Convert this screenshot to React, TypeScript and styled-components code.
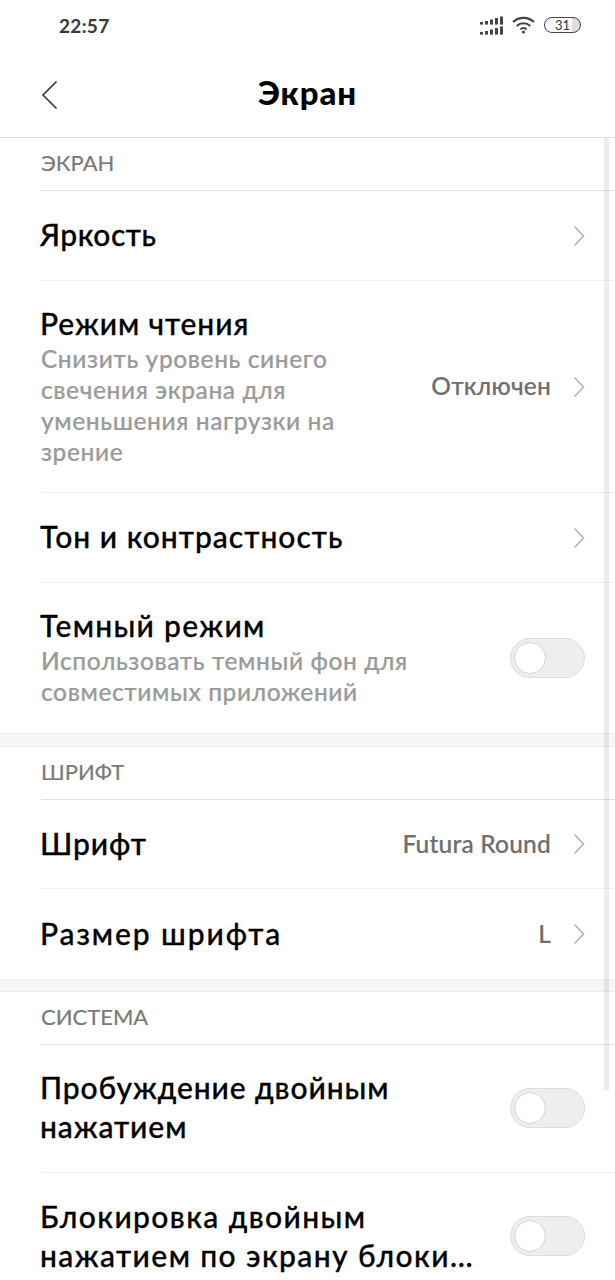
import React from "react";
import styled, { createGlobalStyle } from "styled-components";

const Global = createGlobalStyle`
  html, body { margin: 0; padding: 0; background: #fff; }
  body { font-family: "Lato", "Noto Sans", sans-serif; }
  * { box-sizing: border-box; }
`;

const Page = styled.div`
  position: relative;
  width: 615px;
  height: 1280px;
  overflow: hidden;
  background: #fff;
`;

const StatusBar = styled.div`
  height: 54px;
  display: flex;
  align-items: center;
  justify-content: space-between;
  padding: 0 34px 4px 59px;
`;
const Clock = styled.span`
  font-size: 19px;
  font-weight: 700;
  color: #3a3a3a;
  letter-spacing: 0.3px;
`;
const StatusIcons = styled.div`
  display: flex;
  align-items: center;
  gap: 9px;
`;
const Battery = styled.div`
  width: 37px;
  height: 16px;
  border: 1.5px solid #444;
  border-radius: 8px;
  overflow: hidden;
  display: flex;
  align-items: center;
  justify-content: center;
  font-size: 13px;
  color: #333;
  background: linear-gradient(90deg, #fff 0 76%, #ddd 76% 100%);
`;

const Header = styled.header`
  height: 84px;
  display: flex;
  align-items: center;
  justify-content: center;
  position: relative;
  border-bottom: 1px solid #dedede;
  padding-bottom: 7px;
`;
const Back = styled.svg`
  position: absolute;
  left: 41px;
  top: 26px;
`;
const Title = styled.h1`
  margin: 0;
  font-size: 33px;
  font-weight: 900;
  color: #000;
  letter-spacing: 0.9px;
`;

const SectionLabel = styled.div`
  height: 53px;
  margin-left: 41px;
  border-bottom: 1px solid #e2e2e2;
  display: flex;
  align-items: center;
  font-size: 22px;
  color: #7a7a7a;
  padding-bottom: 4px;
  -webkit-text-stroke: 0.2px #7a7a7a;
`;

const Band = styled.div<{ $h: number }>`
  height: ${(p) => p.$h}px;
  background: #f6f6f6;
  border-top: 1px solid #eee;
  border-bottom: 1px solid #eee;
`;

const Row = styled.div<{ $h: number; $last?: boolean }>`
  height: ${(p) => p.$h}px;
  margin-left: 41px;
  padding-right: 30px;
  display: flex;
  align-items: center;
  justify-content: space-between;
  border-bottom: ${(p) => (p.$last ? "none" : "1px solid #f0f0f0")};
`;
const RowText = styled.div<{ $w?: number }>`
  width: ${(p) => p.$w ?? 440}px;
  display: flex;
  flex-direction: column;
  padding-bottom: 3px;
`;
const RowTitle = styled.div<{ $track?: number }>`
  font-size: 30px;
  line-height: 39px;
  font-weight: 500;
  color: #000;
  letter-spacing: ${(p) => p.$track ?? 0.9}px;
  margin-left: -1px;
  -webkit-text-stroke: 0.3px #000;
`;
const SoloTitle = styled(RowTitle)`
  padding-bottom: 2px;
`;
const RowSub = styled.div`
  font-size: 24.5px;
  line-height: 31px;
  color: #9a9a9a;
  font-weight: 500;
  letter-spacing: 0.6px;
  -webkit-text-stroke: 0.2px #9a9a9a;
`;
const RowRight = styled.div`
  display: flex;
  align-items: center;
  gap: 22px;
`;
const Value = styled.span`
  font-size: 24.5px;
  color: #6e6e6e;
  font-weight: 500;
  letter-spacing: 0.2px;
  padding-bottom: 2px;
  -webkit-text-stroke: 0.2px #6e6e6e;
`;
const Chevron = styled.svg`
  display: block;
`;

const Toggle = styled.div<{ $lift?: number }>`
  position: relative;
  width: 75px;
  height: 40px;
  border-radius: 20px;
  background: #eeeeee;
  border: 1px solid #dcdcdc;
  flex-shrink: 0;
  margin-bottom: ${(p) => p.$lift ?? 0}px;
`;
const Knob = styled.span`
  position: absolute;
  left: 3px;
  top: 3px;
  width: 32px;
  height: 32px;
  border-radius: 50%;
  background: #fff;
  border: 1px solid #d4d4d4;
`;

const Scrollbar = styled.div`
  position: absolute;
  left: 604px;
  top: 138px;
  width: 5px;
  height: 953px;
  border-radius: 0 0 3px 3px;
  background: rgba(0, 0, 0, 0.07);
`;

const Arrow = () => (
  <Chevron width="12" height="22" viewBox="0 0 12 22" fill="none">
    <path d="M1.5 1.5 L10.5 11 L1.5 20.5" stroke="#b4b4b4" strokeWidth="1.6" />
  </Chevron>
);

const Signal = () => (
  <svg width="23" height="19" viewBox="0 0 23 19" fill="#444">
    {[0, 10].map((y) => (
      <g key={y}>
        <rect x="0" y={y + 6} width="3" height="2.6" />
        <rect x="5" y={y + 5} width="3" height="3.6" />
        <rect x="10" y={y + 3.5} width="3" height="5.1" />
        <rect x="15" y={y + 2} width="3" height="6.6" />
        <rect x="20" y={y + 0.5} width="3" height="8.1" />
      </g>
    ))}
  </svg>
);

const Wifi = () => (
  <svg width="23" height="18" viewBox="0 0 23 18" fill="none" stroke="#444" strokeWidth="2.1">
    <path d="M1 6 C7 0.5 16 0.5 22 6" />
    <path d="M4.8 10 C8.5 6.4 14.5 6.4 18.2 10" />
    <path d="M8.4 13.4 C10.2 11.8 12.8 11.8 14.6 13.4" />
    <circle cx="11.5" cy="16" r="1.6" fill="#444" stroke="none" />
  </svg>
);

const Switch = ({ lift }: { lift?: number }) => (
  <Toggle $lift={lift}>
    <Knob />
  </Toggle>
);

export default function App() {
  return (
    <Page>
      <Global />
      <StatusBar>
        <Clock>22:57</Clock>
        <StatusIcons>
          <Signal />
          <Wifi />
          <Battery>31</Battery>
        </StatusIcons>
      </StatusBar>
      <Header>
        <Back width="18" height="30" viewBox="0 0 18 30" fill="none">
          <path d="M15.5 1.5 L2 15 L15.5 28.5" stroke="#333" strokeWidth="1.6" />
        </Back>
        <Title>Экран</Title>
      </Header>

      <SectionLabel>ЭКРАН</SectionLabel>
      <Row $h={90}>
        <SoloTitle $track={0.5}>Яркость</SoloTitle>
        <RowRight><Arrow /></RowRight>
      </Row>
      <Row $h={212}>
        <RowText $w={340}>
          <RowTitle>Режим чтения</RowTitle>
          <RowSub>Снизить уровень синего свечения экрана для уменьшения нагрузки на зрение</RowSub>
        </RowText>
        <RowRight>
          <Value>Отключен</Value>
          <Arrow />
        </RowRight>
      </Row>
      <Row $h={90}>
        <SoloTitle $track={1}>Тон и контрастность</SoloTitle>
        <RowRight><Arrow /></RowRight>
      </Row>
      <Row $h={150} $last>
        <RowText $w={420}>
          <RowTitle $track={1.3}>Темный режим</RowTitle>
          <RowSub>Использовать темный фон для совместимых приложений</RowSub>
        </RowText>
        <Switch />
      </Row>
      <Band $h={14} />

      <SectionLabel>ШРИФТ</SectionLabel>
      <Row $h={89}>
        <SoloTitle>Шрифт</SoloTitle>
        <RowRight>
          <Value>Futura Round</Value>
          <Arrow />
        </RowRight>
      </Row>
      <Row $h={90} $last>
        <SoloTitle $track={1.9}>Размер шрифта</SoloTitle>
        <RowRight>
          <Value>L</Value>
          <Arrow />
        </RowRight>
      </Row>
      <Band $h={13} />

      <SectionLabel>СИСТЕМА</SectionLabel>
      <Row $h={128}>
        <RowText $w={420}>
          <RowTitle>Пробуждение двойным нажатием</RowTitle>
        </RowText>
        <Switch lift={2} />
      </Row>
      <Row $h={128} $last>
        <RowText $w={470}>
          <RowTitle $track={1.4}>Блокировка двойным нажатием по экрану блоки…</RowTitle>
        </RowText>
        <Switch lift={2} />
      </Row>
      <Scrollbar />
    </Page>
  );
}
